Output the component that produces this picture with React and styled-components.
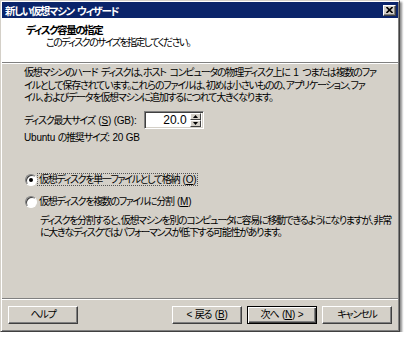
import React from "react";
import styled, { createGlobalStyle } from "styled-components";

const GlobalStyle = createGlobalStyle`
  html, body {
    margin: 0;
    padding: 0;
    background: #fff;
  }
  body {
    font-family: "Liberation Sans", "Noto Sans CJK JP", sans-serif;
    font-size: 10px;
    font-feature-settings: "palt" 1;
    letter-spacing: -1.2px;
    word-spacing: 2px;
    color: #000;
  }
`;

const Window = styled.div`
  box-sizing: border-box;
  width: 400px;
  height: 332px;
  display: flex;
  flex-direction: column;
  padding: 1px;
  background: #d4d0c8;
  border: 1px solid;
  border-color: #d4d0c8 #404040 #404040 #d4d0c8;
  box-shadow: inset 1px 1px #fff, inset -1px -1px #808080,
    2px 2px 2px rgba(0, 0, 0, 0.45);
`;

const TitleBar = styled.div`
  height: 16px;
  flex: none;
  display: flex;
  align-items: center;
  justify-content: space-between;
  padding: 0 2px 0 3px;
  background: #0a246a;
  color: #fff;
  font-size: 10.5px;
  font-weight: bold;
  letter-spacing: -1.45px;
  white-space: nowrap;
`;

const CloseButton = styled.div`
  box-sizing: border-box;
  width: 13px;
  height: 11px;
  display: flex;
  align-items: center;
  justify-content: center;
  background: #d4d0c8;
  border: 1px solid;
  border-color: #fff #404040 #404040 #fff;
  box-shadow: inset -1px -1px #808080;
`;

const Header = styled.div`
  box-sizing: border-box;
  height: 45px;
  flex: none;
  padding: 6px 0 0 24px;
  background: #fff;
  border-bottom: 1px solid #808080;
  white-space: nowrap;
`;

const HeaderTitle = styled.div`
  font-size: 10.5px;
  font-weight: bold;
  letter-spacing: -1.45px;
  line-height: 12px;
`;

const HeaderSub = styled.div`
  margin-top: 1px;
  padding-left: 20px;
  letter-spacing: -1.6px;
  line-height: 12px;
`;

const Content = styled.div`
  flex: 1;
  padding: 3px 0 0 22px;
  border-top: 1px solid #fff;
  white-space: nowrap;
`;

const Paragraph = styled.div`
  line-height: 12.5px;
`;

const Latin = styled.span`
  letter-spacing: -0.2px;
  word-spacing: 0;
`;

const SizeRow = styled.div`
  margin-top: 6px;
  display: flex;
  align-items: center;
  gap: 7px;
`;

const SpinBox = styled.div`
  box-sizing: border-box;
  width: 60px;
  height: 18px;
  display: flex;
  align-items: center;
  padding: 2px;
  background: #fff;
  border: 1px solid;
  border-color: #808080 #fff #fff #808080;
  box-shadow: inset 1px 1px #404040, inset -1px -1px #d4d0c8;
`;

const SpinValue = styled.span`
  flex: 1;
  text-align: right;
  padding-right: 3px;
  line-height: 12px;
  font-size: 12px;
  letter-spacing: 0;
`;

const SpinButtons = styled.div`
  display: flex;
  flex-direction: column;
  width: 11px;
  height: 14px;
`;

const SpinArrow = styled.div`
  box-sizing: border-box;
  flex: 1;
  display: flex;
  align-items: center;
  justify-content: center;
  background: #d4d0c8;
  border: 1px solid;
  border-color: #fff #404040 #404040 #fff;
`;

const Line = styled.div`
  margin-top: ${(p) => p.$gap || 0}px;
  line-height: 12px;
`;

const RadioRow = styled.div`
  margin-top: ${(p) => p.$gap}px;
  height: 14px;
  display: flex;
  align-items: center;
  padding-left: 1px;
`;

const RadioMark = styled.span`
  position: relative;
  box-sizing: border-box;
  width: 12px;
  height: 12px;
  flex: none;
  border-radius: 50%;
  background: #fff;
  border: 1px solid;
  border-color: #808080 #fff #fff #808080;
  box-shadow: inset 1px 1px #404040, 0 0 0 0.5px #d4d0c8;

  &::after {
    content: "";
    display: ${(p) => (p.$checked ? "block" : "none")};
    position: absolute;
    left: 3px;
    top: 3px;
    width: 4px;
    height: 4px;
    border-radius: 50%;
    background: #000;
  }
`;

const RadioLabel = styled.span`
  padding: 0 1px;
  line-height: 11px;
  letter-spacing: -1.35px;
  border: 1px dotted ${(p) => (p.$focused ? "#555" : "transparent")};
`;

const Description = styled.div`
  margin-top: 6px;
  padding-left: 16px;
  line-height: 12px;
  letter-spacing: -1.3px;
`;

const Footer = styled.div`
  box-sizing: border-box;
  height: 32px;
  flex: none;
  display: flex;
  justify-content: space-between;
  align-items: flex-start;
  padding: 7px 6px 0 6px;
  border-top: 1px solid #808080;
  box-shadow: inset 0 1px #fff;
`;

const ButtonGroup = styled.div`
  display: flex;
  gap: 5px;
`;

const Button = styled.div`
  box-sizing: border-box;
  width: 70px;
  height: 18px;
  display: flex;
  align-items: center;
  justify-content: center;
  white-space: pre;
  line-height: 12px;
  background: #d4d0c8;
  border: 1px solid;
  border-color: ${(p) => (p.$default ? "#000" : "#fff #404040 #404040 #fff")};
  box-shadow: ${(p) =>
    p.$default
      ? "inset 1px 1px #fff, inset -1px -1px #404040, inset -2px -2px #808080"
      : "inset -1px -1px #808080"};
`;

const Key = styled.span`
  text-decoration: underline;
`;

const Arrow = ({ up }) => (
  <svg width="5" height="3" viewBox="0 0 5 3">
    <path d={up ? "M0 3 L2.5 0 L5 3 Z" : "M0 0 L2.5 3 L5 0 Z"} fill="#000" />
  </svg>
);

export default function App() {
  return (
    <>
      <GlobalStyle />
      <Window>
        <TitleBar>
          <span>新しい仮想マシン ウィザード</span>
          <CloseButton>
            <svg width="7" height="6" viewBox="0 0 7 6">
              <path d="M0.5 0 L6.5 6 M6.5 0 L0.5 6" stroke="#000" strokeWidth="1.6" />
            </svg>
          </CloseButton>
        </TitleBar>
        <Header>
          <HeaderTitle>ディスク容量の指定</HeaderTitle>
          <HeaderSub>このディスクのサイズを指定してください。</HeaderSub>
        </Header>
        <Content>
          <Paragraph>
            仮想マシンのハード ディスクは、ホスト コンピュータの物理ディスク上に <Latin>1</Latin> つまたは複数のファ
            <br />
            イルとして保存されています。これらのファイルは、初めは小さいものの、アプリケーション、ファ
            <br />
            イル、およびデータを仮想マシンに追加するにつれて大きくなります。
          </Paragraph>
          <SizeRow>
            <span>
              ディスク最大サイズ <Latin>(<Key>S</Key>) (GB):</Latin>
            </span>
            <SpinBox>
              <SpinValue>20.0</SpinValue>
              <SpinButtons>
                <SpinArrow>
                  <Arrow up />
                </SpinArrow>
                <SpinArrow>
                  <Arrow />
                </SpinArrow>
              </SpinButtons>
            </SpinBox>
          </SizeRow>
          <Line $gap={3}>
            <Latin>Ubuntu </Latin>の推奨サイズ<Latin>: 20 GB</Latin>
          </Line>
          <RadioRow $gap={29}>
            <RadioMark $checked />
            <RadioLabel $focused>
              仮想ディスクを単一ファイルとして格納 <Latin>(<Key>O</Key>)</Latin>
            </RadioLabel>
          </RadioRow>
          <RadioRow $gap={8}>
            <RadioMark />
            <RadioLabel>
              仮想ディスクを複数のファイルに分割 <Latin>(<Key>M</Key>)</Latin>
            </RadioLabel>
          </RadioRow>
          <Description>
            ディスクを分割すると、仮想マシンを別のコンピュータに容易に移動できるようになりますが、非常
            <br />
            に大きなディスクではパフォーマンスが低下する可能性があります。
          </Description>
        </Content>
        <Footer>
          <Button>ヘルプ</Button>
          <ButtonGroup>
            <Button>
              {"< 戻る "}
              <Latin>
                (<Key>B</Key>)
              </Latin>
            </Button>
            <Button $default>
              {"次へ "}
              <Latin>
                (<Key>N</Key>) &gt;
              </Latin>
            </Button>
            <Button>キャンセル</Button>
          </ButtonGroup>
        </Footer>
      </Window>
    </>
  );
}
